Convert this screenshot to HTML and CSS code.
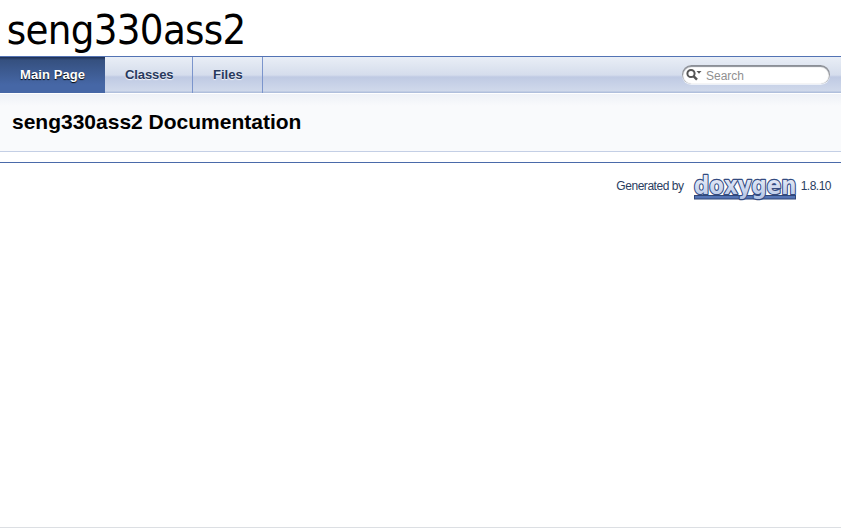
FILE: index.html
```
<!DOCTYPE html>
<html lang="en">
<head>
<meta charset="utf-8">
<title>seng330ass2: Main Page</title>
<link rel="stylesheet" href="styles.css">
</head>
<body>
<div class="titlearea"><svg class="project" width="260" height="56"><text x="6.8" y="43.7" textLength="239.5" lengthAdjust="spacing">seng330ass2</text></svg></div>
<nav class="tabs">
  <a class="tab current">Main Page</a>
  <a class="tab classes">Classes</a>
  <a class="tab files">Files</a>
  <div class="search">
    <svg class="mag" width="18" height="14" viewBox="0 0 18 14"><circle cx="6" cy="5.5" r="3.6" fill="none" stroke="#555" stroke-width="2"/><path d="M8.5 8.2L12 11.7" stroke="#555" stroke-width="2.4"/><path d="M11.5 3h5L14 5.8z" fill="#555"/></svg>
    <span>Search</span>
  </div>
</nav>
<header class="header"><h1>seng330ass2 Documentation</h1></header>
<main class="contents"></main>
<footer class="footer">
  <span class="generated">Generated by</span>
  <svg class="logo" width="104" height="27" viewBox="0 0 104 27">
    <defs><linearGradient id="g" x1="0" y1="0" x2="0" y2="1"><stop offset="0" stop-color="#f6f8fd"/><stop offset="1" stop-color="#b2c3e5"/></linearGradient></defs>
    <rect x="1.5" y="22.5" width="101" height="3.5" fill="#5373b4" stroke="#304778"/>
    <text class="word" x="1" y="20.8" textLength="102.5" lengthAdjust="spacingAndGlyphs" fill="url(#g)">doxygen</text>
  </svg>
  <span class="version">1.8.10</span>
</footer>
</body>
</html>
```
FILE: styles.css
```
body {
  margin: 0;
  height: 528px;
  box-sizing: border-box;
  border-bottom: 1px solid #dcdfe3;
  background: #fff;
  color: #000;
  font-family: "Liberation Sans", Arial, sans-serif;
  overflow: hidden;
}
.titlearea {
  height: 56px;
  border-bottom: 1px solid #5373b4;
}
.project {
  display: block;
  overflow: visible;
  font: 41.5px "DejaVu Sans Condensed", "DejaVu Sans", sans-serif;
}
.tabs {
  display: flex;
  height: 36px;
  background: linear-gradient(#e9eef6 0, #d5ddec 18px, #bfcae3 20px, #d0d9eb 34px, #b0bfdc 35px, #b0bfdc 36px);
}
.tab {
  box-sizing: border-box;
  padding-left: 20px;
  border-right: 1px solid #7b95cc;
  color: #283a5d;
  font-size: 13px;
  font-weight: bold;
  line-height: 36px;
  text-shadow: 0 1px 1px rgba(255, 255, 255, .9);
}
.tab.current {
  width: 105px;
  border: 0;
  background: linear-gradient(#1d2e52 0, #35507f 3px, #4667a6 28px, #4667a6 36px);
  color: #fff;
  letter-spacing: .1px;
  text-shadow: 0 1px 1px #000;
}
.tab.classes {
  width: 88px;
  letter-spacing: -.1px;
}
.tab.files {
  width: 70px;
}
.search {
  display: flex;
  align-items: center;
  box-sizing: border-box;
  width: 148px;
  height: 19px;
  margin: 8px 11px 0 auto;
  padding-left: 3px;
  border-radius: 10px;
  background: #fff;
  box-shadow: inset 0 1px 1px 1px #8b8f97, 0 1px 0 #edf1f8;
  color: #909090;
  font-size: 12px;
}
.mag {
  margin-right: 3px;
}
.search span {
  padding-top: 2px;
}
.header {
  height: 57px;
  border-top: 1px solid #fff;
  border-bottom: 1px solid #c4cfe5;
  background: linear-gradient(#eef1f7 0, #f9fafc 12px);
}
.header h1 {
  margin: 0;
  padding: 15px 0 0 12px;
  font-size: 21px;
  line-height: 26px;
}
.contents {
  height: 10px;
}
.footer {
  display: flex;
  justify-content: flex-end;
  padding: 10px 10px 0 0;
  border-top: 1px solid #4a6aaa;
  color: #2a3d61;
  font-size: 12px;
  line-height: 26px;
}
.generated {
  margin-right: 9px;
  letter-spacing: -.45px;
}
.logo {
  margin-right: 4px;
  overflow: visible;
}
.version {
  letter-spacing: -.5px;
}
.word {
  font: bold 24.5px "DejaVu Sans", sans-serif;
  stroke: #344b80;
  stroke-width: 2.4px;
  paint-order: stroke;
  stroke-linejoin: round;
}
```
